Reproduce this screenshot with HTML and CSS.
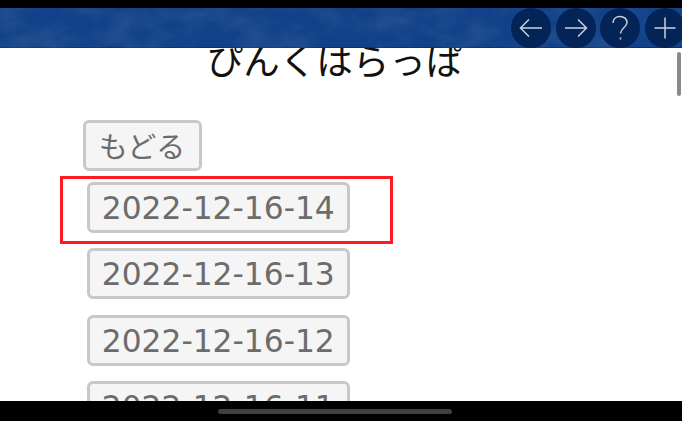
FILE: index.html
```html
<!DOCTYPE html>
<html lang="ja">

<head>
  <meta charset="UTF-8">
  <title>ぴんくはらっぱ</title>
  <link rel="stylesheet" href="styles.css">
</head>

<body>
  <div class="bar-top"></div>

  <header class="header">
    <svg class="texture" width="682" height="40" aria-hidden="true">
      <filter id="marble">
        <feTurbulence type="fractalNoise" baseFrequency="0.03 0.045" numOctaves="5" seed="11" />
        <feColorMatrix type="matrix" values="0 0 0 0 0.03  0 0 0 0 0.11  0 0 0 0 0.30  1.1 0 0 0 -0.42" />
      </filter>
      <rect width="682" height="40" filter="url(#marble)" />
    </svg>
    <nav class="tools">
      <div class="tool">
        <svg width="26" height="26" viewBox="0 0 26 26"><path d="M24 13H2.500M11 4.500l-8.500 8.500 8.500 8.500" /></svg>
      </div>
      <div class="tool">
        <svg width="26" height="26" viewBox="0 0 26 26"><path d="M2 13h21.500M15 4.500l8.500 8.500-8.500 8.500" /></svg>
      </div>
      <div class="tool">
        <svg width="26" height="26" viewBox="0 0 26 26"><path d="M6 8c0-4 3-6.500 7-6.500s7 2.500 7 6c0 5-6.500 5.500-6.500 11" /><path d="M13.500 22.500v2" /></svg>
      </div>
      <div class="tool">
        <svg width="26" height="26" viewBox="0 0 26 26"><path d="M13 2.500v21M2.500 13h21" /></svg>
      </div>
    </nav>
  </header>

  <main class="content">
    <h1 class="title">ぴんくはらっぱ</h1>
    <div class="list">
      <a class="button button-back">もどる</a>
      <div class="dates">
        <a class="button">2022-12-16-14</a>
        <a class="button">2022-12-16-13</a>
        <a class="button">2022-12-16-12</a>
        <a class="button">2022-12-16-11</a>
      </div>
    </div>
    <div class="highlight"></div>
    <div class="scrollbar"></div>
  </main>

  <footer class="bar-bottom">
    <div class="home"></div>
  </footer>
</body>

</html>
```

FILE: styles.css
```css
html,
body {
  margin: 0;
  height: 100%;
  overflow: hidden;
}

body {
  display: flex;
  flex-direction: column;
  background: #fff;
  font-family: "DejaVu Sans", "Noto Sans CJK JP", sans-serif;
}

.bar-top {
  height: 8px;
  background: #000;
}

.header {
  position: relative;
  height: 40px;
  background: #124189;
  box-shadow: inset 0 -1px 0 #16305c;
}

.texture {
  position: absolute;
  top: 0;
  left: 0;
}

.tools {
  position: relative;
  display: flex;
  justify-content: flex-end;
  gap: 4.500px;
  margin-right: -2.500px;
}

.tool {
  width: 40px;
  height: 40px;
  border-radius: 50%;
  background: #042458;
  display: flex;
  align-items: center;
  justify-content: center;
}

.tool svg {
  fill: none;
  stroke: #c9cfda;
  stroke-width: 1.5;
}

.content {
  position: relative;
  flex: 1;
  overflow: hidden;
}

.title {
  margin: -14px 13px 0 0;
  font-family: "Noto Sans CJK JP", sans-serif;
  font-size: 36.500px;
  font-weight: 400;
  line-height: 52px;
  color: #111;
  text-align: center;
}

.list {
  margin: 34px 0 0 82.500px;
}

.dates {
  display: flex;
  flex-direction: column;
  align-items: flex-start;
  gap: 15.330px;
  margin: 11px 0 0 4px;
}

.button {
  display: block;
  box-sizing: border-box;
  width: 263.500px;
  height: 51px;
  padding-top: 1px;
  border: 3px solid #c8c8c8;
  border-radius: 6px;
  background: #f5f5f5;
  color: #6c6c6c;
  font-size: 31.300px;
  line-height: 44px;
  text-align: center;
  flex: none;
}

.button-back {
  width: 119px;
  padding-top: 0;
  font-family: "Noto Sans CJK JP", sans-serif;
  font-size: 29px;
}

.highlight {
  position: absolute;
  left: 60px;
  top: 128px;
  width: 327px;
  height: 62px;
  border: 3px solid #fb1c24;
}

.scrollbar {
  position: absolute;
  right: 1px;
  top: 4px;
  width: 4px;
  height: 44px;
  border-radius: 2px;
  background: #8a8a8a;
}

.bar-bottom {
  position: relative;
  height: 20px;
  background: #000;
  display: flex;
  justify-content: center;
  align-items: center;
}

.home {
  width: 234px;
  height: 5px;
  margin-right: 12px;
  border-radius: 3px;
  background: #404040;
}
```
